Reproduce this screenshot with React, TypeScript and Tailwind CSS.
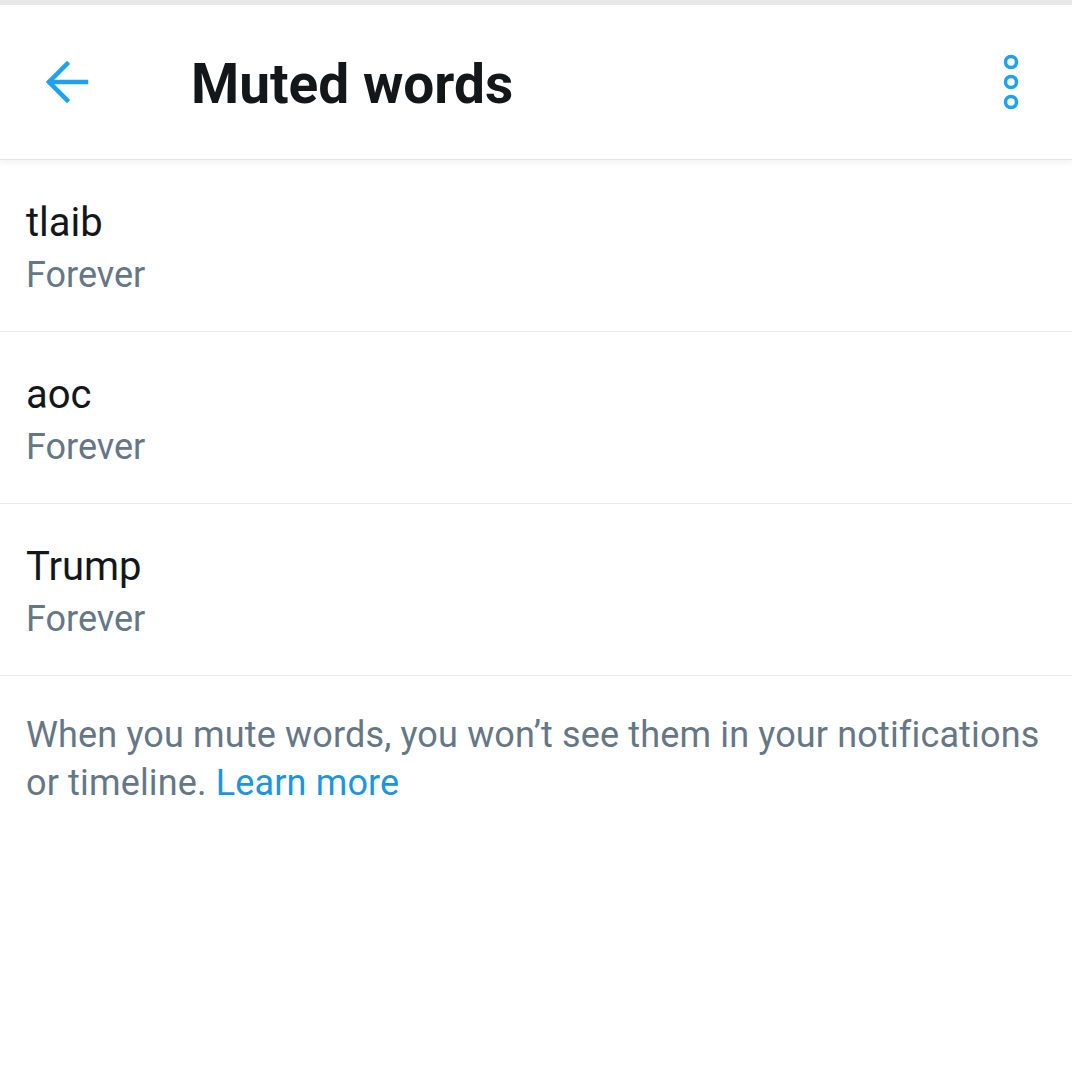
import React from 'react';

const words = ['tlaib', 'aoc', 'Trump'];

const BackArrow = () => (
  <svg width="44" height="44" viewBox="0 0 44 44" fill="none" stroke="#1da1f2" strokeWidth="4.5" strokeLinecap="square">
    <path d="M5 22 H41" />
    <path d="M22 4 L4 22 L22 40" strokeLinejoin="miter" />
  </svg>
);

const MoreIcon = () => (
  <svg width="20" height="60" viewBox="0 0 20 60" fill="none" stroke="#1da1f2" strokeWidth="3.5">
    <circle cx="10" cy="10" r="5.5" />
    <circle cx="10" cy="30" r="5.5" />
    <circle cx="10" cy="50" r="5.5" />
  </svg>
);

export default function App() {
  return (
    <div className="min-h-screen bg-white font-['Roboto','Liberation_Sans',sans-serif]">
      <div className="h-[5px] bg-[#e8e8e8]" />
      <header className="relative flex h-[155px] items-center border-b border-[#e3e3e3] bg-white shadow-[0_3px_6px_rgba(0,0,0,0.05)]">
        <div className="ml-[45px] flex h-[44px] w-[44px] items-center justify-center">
          <BackArrow />
        </div>
        <h1 className="ml-[102px] mt-[5px] text-[55px] font-bold leading-none text-[#14171a]">Muted words</h1>
        <div className="ml-auto mr-[51px] flex items-center">
          <MoreIcon />
        </div>
      </header>

      <ul>
        {words.map((w) => (
          <li key={w} className="border-b border-[#e9ecee] px-[26px] pt-[38px] pb-[31px]">
            <div className="h-[50px] text-[40px] leading-[50px] text-[#14171a]">{w}</div>
            <div className="mt-[2px] h-[50px] text-[36px] leading-[50px] text-[#657786]">Forever</div>
          </li>
        ))}
      </ul>

      <p className="px-[26px] pt-[35px] pr-[20px] text-[36px] leading-[48px] tracking-[0.15px] text-[#657786]">
        When you mute words, you won’t see them in your notifications or timeline.{' '}
        <span className="text-[#1b95e0]">Learn more</span>
      </p>
    </div>
  );
}
